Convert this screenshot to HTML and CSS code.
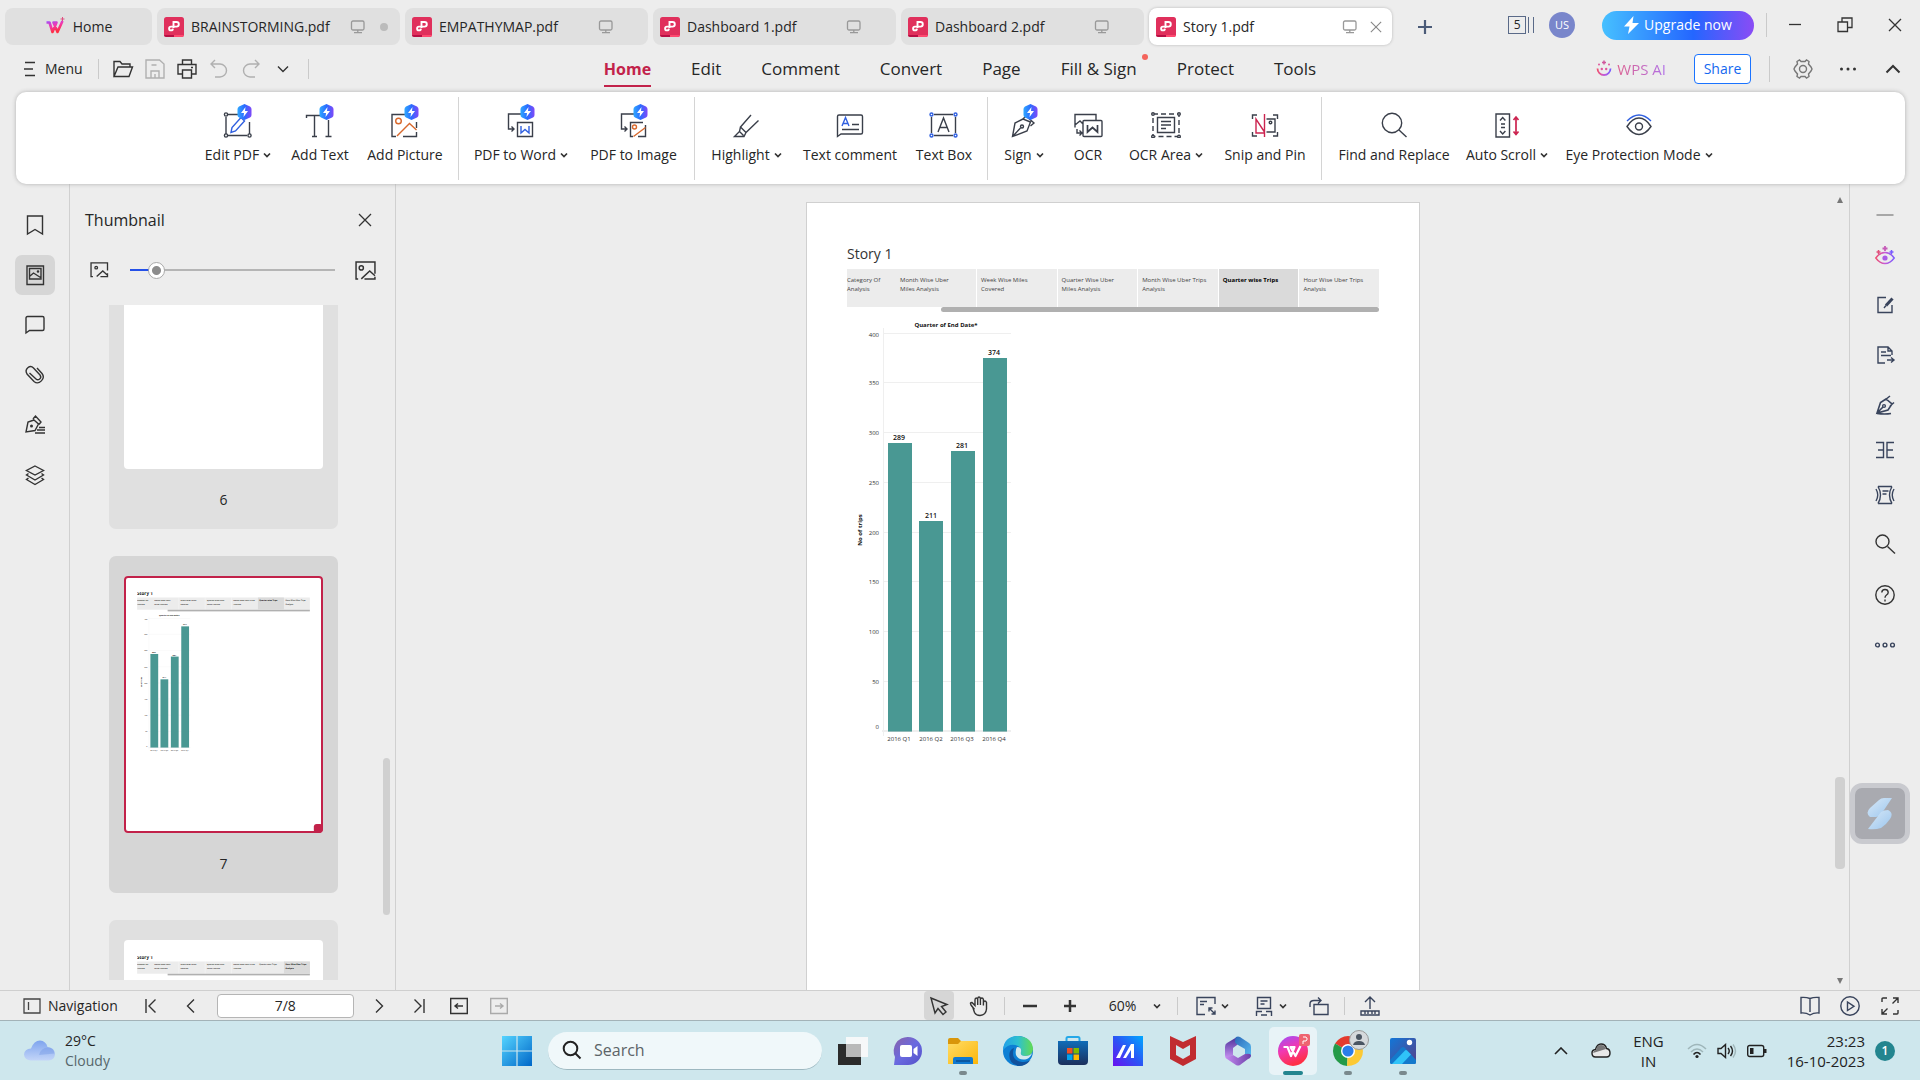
FILE: index.html
```html
<!DOCTYPE html>
<html lang="en">
<head>
<meta charset="utf-8">
<title>Story 1.pdf</title>
<link rel="stylesheet" href="styles.css">
</head>
<body>
<svg class="defs" width="0" height="0" aria-hidden="true">
  <defs>
    <linearGradient id="g-hex" x1="0" x2="1"><stop offset="0" stop-color="#2fa8ff"/><stop offset=".5" stop-color="#2b6cff"/><stop offset="1" stop-color="#8048f8"/></linearGradient>
    <linearGradient id="g-ai" x1="0" x2="1"><stop offset="0" stop-color="#f0506e"/><stop offset=".5" stop-color="#c65bd8"/><stop offset="1" stop-color="#7a5cff"/></linearGradient>
    <linearGradient id="g-win" x1="0" y1="0" x2="1" y2="1"><stop offset="0" stop-color="#55d4ff"/><stop offset="1" stop-color="#0067c8"/></linearGradient>
    <linearGradient id="g-cloud" x1="0" y1="0" x2="0" y2="1"><stop offset="0" stop-color="#7ea4ee"/><stop offset="1" stop-color="#c3d5f8"/></linearGradient>
    <linearGradient id="g-chat" x1="0" y1="0" x2="1" y2="1"><stop offset="0" stop-color="#8a63a8"/><stop offset=".5" stop-color="#6a6ae0"/><stop offset="1" stop-color="#5450c8"/></linearGradient>
    <linearGradient id="g-folder" x1="0" y1="0" x2="1" y2="1"><stop offset="0" stop-color="#ffdc66"/><stop offset="1" stop-color="#fbb60a"/></linearGradient>
    <linearGradient id="g-edge" x1="0" y1="0" x2="1" y2="0"><stop offset="0" stop-color="#22a0e8"/><stop offset=".5" stop-color="#2ec0d0"/><stop offset="1" stop-color="#63dc50"/></linearGradient>
    <linearGradient id="g-store" x1="0" y1="0" x2="0" y2="1"><stop offset="0" stop-color="#0f6cb8"/><stop offset="1" stop-color="#1c2f5c"/></linearGradient>
    <linearGradient id="g-asus" x1="1" y1="0" x2="0" y2="1"><stop offset="0" stop-color="#00a8ff"/><stop offset=".5" stop-color="#2b55f5"/><stop offset="1" stop-color="#6a10f0"/></linearGradient>
    <linearGradient id="g-wps" x1="0" y1="0" x2=".4" y2="1"><stop offset="0" stop-color="#9a50ff"/><stop offset=".5" stop-color="#f238b0"/><stop offset="1" stop-color="#ff2f45"/></linearGradient>
    <linearGradient id="g-photo" x1="0" y1="0" x2="1" y2="1"><stop offset="0" stop-color="#1277d8"/><stop offset="1" stop-color="#584088"/></linearGradient>
    <linearGradient id="g-365a" x1="0" y1="0" x2="0" y2="1"><stop offset="0" stop-color="#4a2f98"/><stop offset="1" stop-color="#c490f0"/></linearGradient>
    <linearGradient id="g-365b" x1="0" y1="0" x2="1" y2="1"><stop offset="0" stop-color="#2c68b8"/><stop offset="1" stop-color="#58bdf2"/></linearGradient>
    <linearGradient id="g-365c" x1="0" y1="0" x2="1" y2="0"><stop offset="0" stop-color="#c78cf2"/><stop offset="1" stop-color="#6a3fa8"/></linearGradient>
    <linearGradient id="g-float" x1="0" y1="0" x2="1" y2="1"><stop offset="0" stop-color="#d8e9f8"/><stop offset="1" stop-color="#9cc6ee"/></linearGradient>
    <symbol id="hex" viewBox="0 0 15 16"><g stroke="none"><path d="M7.500 0l5.500 2.500q1.500 1 1.500 2.500v6q0 1.500-1.500 2.500L7.500 16 2 13.500Q.5 12.500.5 11V5Q.5 3.500 2 2.500z" fill="url(#g-hex)"/><path d="M8.500 3L4 9h3l-.5 4L11 7H8z" fill="#fff"/></g></symbol>
    <symbol id="pdf" viewBox="0 0 20 20"><rect width="20" height="20" rx="2.500" fill="#e0305c"/><path d="M0 18h10v2H2.500Q0 20 0 18z" fill="#b80f44"/><path d="M10 18h10q0 2-2.500 2H10z" fill="#ff4a70"/><path d="M9.500 11V5h3a2.300 2.300 0 0 1 0 4.600H7a1.900 1.900 0 1 0 1.900 2" fill="none" stroke="#fff" stroke-width="1.900"/></symbol>
    <symbol id="screen" viewBox="0 0 16 14"><g fill="none" stroke="#999" stroke-width="1.300"><rect x="1.500" y="1" width="12.500" height="9" rx="1.500"/><path d="M7.800 10v2.500M4 12.600h8"/></g></symbol>
    <symbol id="chev" viewBox="0 0 8 8"><path d="M1 2.500L4 5.500 7 2.500" fill="none" stroke="#333" stroke-width="1.700"/></symbol>
    <symbol id="chart" viewBox="0 0 180 440">
      <g class="chart-grid"><path d="M36.500 16v408M36 21.500h128M36 70.500h128M36 120.500h128M36 170.500h128M36 220.500h128M36 269.500h128M36 319.500h128M36 369.500h128"/><path d="M35 419h129" stroke-width="2"/></g>
      <g fill="#499893"><rect x="41" y="131" width="24" height="288"/><rect x="72" y="209" width="24" height="210"/><rect x="104" y="139" width="24" height="280"/><rect x="136" y="46" width="24" height="373"/></g>
      <g fill="#91b9b7"><path d="M41 419h24v1H41zM72 419h24v1H72zM104 419h24v1h-24zM136 419h24v1h-24z"/></g>
      <g class="chart-strong"><text x="99" y="15">Quarter of End Date*</text><text transform="translate(15 218) rotate(-90)">No of trips</text></g>
      <g class="chart-value"><text x="52" y="128">289</text><text x="84" y="206">211</text><text x="115" y="136">281</text><text x="147" y="43">374</text></g>
      <g class="chart-axis"><text x="32" y="25">400</text><text x="32" y="73">350</text><text x="32" y="123">300</text><text x="32" y="173">250</text><text x="32" y="223">200</text><text x="32" y="272">150</text><text x="32" y="322">100</text><text x="32" y="372">50</text><text x="32" y="417">0</text></g>
      <g class="chart-quarter"><text x="52" y="429">2016 Q1</text><text x="84" y="429">2016 Q2</text><text x="115" y="429">2016 Q3</text><text x="147" y="429">2016 Q4</text></g>
    </symbol>
    <symbol id="strip" viewBox="0 0 532 60">
      <path d="M0 16h532v38H0z" fill="#ececec"/><path d="M128.500 16v38M209.500 16v38M290.500 16v38" stroke="#fff"/><path d="M94 54h438v5H94z" fill="#b0b0b0"/>
      <text class="mini-title" x="0" y="7">Story 1</text>
      <g class="mini-text"><text x="0" y="28">Category Of</text><text x="0" y="38">Analysis</text><text x="53" y="28">Month Wise Uber</text><text x="53" y="38">Miles Analysis</text><text x="134" y="28">Week Wise Miles</text><text x="134" y="38">Covered</text><text x="215" y="28">Quarter Wise Uber</text><text x="215" y="38">Miles Analysis</text><text x="296" y="28">Month Wise Uber Trips</text><text x="296" y="38">Analysis</text></g>
    </symbol>
  </defs>
</svg>

<header class="titlebar">
  <nav class="doc-tabs" aria-label="Open documents">
    <button class="doc-tab doc-tab--home"><svg width="20" height="20" viewBox="0 0 20 20"><path d="M1.500 5.500h3l3 9.500 4-9.500-3 0 4 9.500 5-11" fill="none" stroke="url(#g-wps)" stroke-width="2.600" stroke-linejoin="round"/><path d="M17.500 0v4M15.500 2h4" stroke="#e05080"/></svg>Home</button>
    <button class="doc-tab"><svg class="pdf"><use href="#pdf"/></svg><span>BRAINSTORMING.pdf</span><svg class="screen"><use href="#screen"/></svg><i class="unsaved"></i></button>
    <button class="doc-tab"><svg class="pdf"><use href="#pdf"/></svg><span>EMPATHYMAP.pdf</span><svg class="screen"><use href="#screen"/></svg><i class="tab-end"></i></button>
    <button class="doc-tab"><svg class="pdf"><use href="#pdf"/></svg><span>Dashboard 1.pdf</span><svg class="screen"><use href="#screen"/></svg><i class="tab-end"></i></button>
    <button class="doc-tab"><svg class="pdf"><use href="#pdf"/></svg><span>Dashboard 2.pdf</span><svg class="screen"><use href="#screen"/></svg><i class="tab-end"></i></button>
    <button class="doc-tab doc-tab--active"><svg class="pdf"><use href="#pdf"/></svg><span>Story 1.pdf</span><svg class="screen"><use href="#screen"/></svg><svg class="tab-close" viewBox="0 0 14 14"><path d="M1 1l12 12M13 1L1 13" stroke="#888" stroke-width="1.300"/></svg></button>
    <button class="new-tab" aria-label="New tab"><svg width="16" height="16" viewBox="0 0 16 16"><path d="M8 1v14M1 8h14" stroke="#4b5b78" stroke-width="2.200"/></svg></button>
  </nav>
  <div class="account">
    <button class="tab-count"><span>5</span></button>
    <button class="avatar">US</button>
    <button class="upgrade"><svg width="15" height="18" viewBox="0 0 15 18"><path d="M9.500 0L0 10.500h5.500L4 18 15 7H8.500z" fill="#fff"/></svg>Upgrade now</button>
    <i class="sep"></i>
    <button class="window-btn" aria-label="Minimise"><svg width="14" height="14" viewBox="0 0 14 14"><path d="M1 6.500h12" stroke="#333" stroke-width="1.300"/></svg></button>
    <button class="window-btn" aria-label="Restore"><svg width="16" height="16" viewBox="0 0 16 16" fill="none" stroke="#333" stroke-width="1.300"><path d="M1 5h9.500v9.500H1zM5 5V1h10v9.500h-4.500"/></svg></button>
    <button class="window-btn" aria-label="Close"><svg width="14" height="14" viewBox="0 0 14 14"><path d="M1 1l12 12M13 1L1 13" stroke="#333" stroke-width="1.300"/></svg></button>
  </div>
</header>

<div class="menubar">
  <div class="quick">
    <button class="menu-btn"><svg width="12" height="16" viewBox="0 0 12 16"><path d="M1 1.500h10M0 8h9M1 14.500h10" stroke="#333" stroke-width="1.300"/></svg>Menu</button>
    <i class="sep"></i>
    <button class="quick-btn" aria-label="Open"><svg class="ic20" viewBox="0 0 20 20"><path d="M1 17V2.500h6l2 2.500h8v3M1 17.500L5 8h14.500l-3.500 9.500z"/></svg></button>
    <button class="quick-btn quick-btn--off" aria-label="Save"><svg class="ic20" viewBox="0 0 20 20"><path d="M1 1h13.500L19 5v14H1zM6 19v-7h8v7M6.500 6h5M10 15v4"/></svg></button>
    <button class="quick-btn" aria-label="Print"><svg class="ic20" viewBox="0 0 20 20"><path d="M5.500 5V1h9v4M5 15H1V5.500h18V15h-4M5.500 11h9v8h-9zM14 8.500h2"/></svg></button>
    <button class="quick-btn quick-btn--off" aria-label="Undo"><svg class="ic20" viewBox="0 0 20 20"><path d="M6 1L2 5l4 4M2 5h9a6.500 6.500 0 0 1 0 13H6"/></svg></button>
    <button class="quick-btn quick-btn--off" aria-label="Redo"><svg class="ic20" viewBox="0 0 20 20"><path d="M14 1l4 4-4 4M18 5H9a6.500 6.500 0 0 0 0 13h5"/></svg></button>
    <button class="quick-btn" aria-label="More"><svg class="ic20" viewBox="0 0 20 20"><path d="M5 7.500l5 5 5-5"/></svg></button>
    <i class="sep"></i>
  </div>
  <nav class="ribbon-tabs" aria-label="Ribbon">
    <a class="active" href="#">Home</a><a href="#">Edit</a><a href="#">Comment</a><a href="#">Convert</a><a href="#">Page</a><a class="has-dot" href="#">Fill &amp; Sign</a><a href="#">Protect</a><a href="#">Tools</a>
  </nav>
  <div class="menu-right">
    <a class="wps-ai" href="#"><svg width="16" height="18" viewBox="0 0 16 18"><path d="M1.500 8.500a6.500 6.500 0 1 0 13 0" fill="none" stroke="url(#g-ai)" stroke-width="1.800"/><path d="M8 .5v4M6 2.500h4" stroke="#d0569c" stroke-width="1.500"/><g fill="#e0569c"><circle cx="3" cy="4.500" r="1"/><circle cx="13" cy="4.500" r="1"/><circle cx="5.800" cy="9" r="1.200"/><circle cx="10.200" cy="9" r="1.200"/></g></svg><span>WPS AI</span></a>
    <button class="share">Share</button>
    <i class="sep"></i>
    <button class="tool-btn" aria-label="Settings"><svg class="ic20 grey" viewBox="0 0 20 20"><path d="M8 2.500L6.500 1 4 2.500 4.500 5 2 8 1 10l1 2 2.500 3L4 17.500 6.500 19 8 17.500h4l1.500 1.500 2.500-1.500-.5-2.500L18 12l1-2-1-2-2.500-3 .5-2.500L13.500 1 12 2.500z"/><circle cx="10" cy="10" r="3.500"/></svg></button>
    <button class="tool-btn" aria-label="More options"><svg class="ic20" viewBox="0 0 20 20"><g fill="#333" stroke="none"><circle cx="3.500" cy="10" r="1.500"/><circle cx="10" cy="10" r="1.500"/><circle cx="16.500" cy="10" r="1.500"/></g></svg></button>
    <button class="tool-btn" aria-label="Collapse ribbon"><svg class="ic20" viewBox="0 0 20 20"><path d="M3.500 13.500l6.500-6.500 6.500 6.500" stroke-width="2"/></svg></button>
  </div>
</div>

<div class="ribbon">
  <button><svg class="ric" viewBox="0 0 32 36"><path d="M5 12.500h14M4 15v17M27.500 20v12M6 33.500h19"/><path d="M9 30.500l1-5 9-10 3.500 3.500-9 10z" stroke="#2f5fe0"/><g fill="#fff"><circle cx="4" cy="12.500" r="1.600"/><circle cx="4" cy="33.500" r="1.600"/><circle cx="27.500" cy="33.500" r="1.600"/></g><use href="#hex" x="15" y="2" width="15" height="16"/></svg><span>Edit PDF<svg class="chev"><use href="#chev"/></svg></span></button>
  <button><svg class="ric" viewBox="0 0 32 36"><path d="M2.500 16v-2.500H17M10.500 14v20M8 34.500h5M24.500 18v16M21.500 34.500h6"/><use href="#hex" x="15" y="2" width="15" height="16"/></svg><span>Add Text</span></button>
  <button><svg class="ric" viewBox="0 0 32 36"><path d="M16 12.500H3v22h4M27.500 20v6M27.500 30v4.500H14"/><g stroke="#d8682c"><circle cx="9.500" cy="19" r="2.800"/><path d="M8 34l12.500-12.500 7 6.500"/></g><use href="#hex" x="15" y="2" width="15" height="16"/></svg><span>Add Picture</span></button>
  <i></i>
  <button><svg class="ric" viewBox="0 0 32 36"><path d="M16 12H3.500v15H9M6.500 24.500L9 27l-2.500 2.500M12.500 20.500h15v14h-15z"/><path d="M16 24v7l4-3.500 4 3.500v-7" stroke="#2f5fe0"/><use href="#hex" x="15" y="2" width="15" height="16"/></svg><span>PDF to Word<svg class="chev"><use href="#chev"/></svg></span></button>
  <button><svg class="ric" viewBox="0 0 32 36"><path d="M16 12H3.500v15H9M6.500 24.500L9 27l-2.500 2.500M15 34.500h-2.500v-14H25M27.500 23v11.500H20"/><g stroke="#d8682c"><circle cx="16.500" cy="25" r="2"/><path d="M15.500 34.500l12-9"/></g><use href="#hex" x="15" y="2" width="15" height="16"/></svg><span>PDF to Image</span></button>
  <i></i>
  <button><svg class="ric" viewBox="0 0 32 36"><path d="M20 13l-10.500 12 5.500 5.500 12.500-12M9.500 25l-1 4.500-5 5H13l2-4M8.500 29.500l4 4"/></svg><span>Highlight<svg class="chev"><use href="#chev"/></svg></span></button>
  <button><svg class="ric" viewBox="0 0 32 36"><path d="M3.500 34.500v-20q0-1.500 1.500-1.500h22q1.500 0 1.500 1.500v16q0 1.500-1.500 1.500H7zM18 22.500h7M8 27.500h17"/><path d="M8 24l3.500-8.500L15 24M9.300 21.500h4.500" stroke="#2f5fe0"/></svg><span>Text comment</span></button>
  <button><svg class="ric" viewBox="0 0 32 36"><path d="M6 12.500h19M6 33.500h19M3.500 15v16M27.500 15v16M10 30l5.500-14L21 30M12 25.500h7"/><g fill="#fff" stroke="#2f5fe0"><circle cx="3.500" cy="12.500" r="1.500"/><circle cx="3.500" cy="33.500" r="1.500"/><circle cx="27.500" cy="12.500" r="1.500"/><circle cx="27.500" cy="33.500" r="1.500"/></g></svg><span>Text Box</span></button>
  <i></i>
  <button><svg class="ric" viewBox="0 0 32 36"><path d="M15 17l-8 4-2.500 13.500 14.500-5.500 3.500-9zM15 17l3-3 8 7-3.500 3M5 34l7.500-8"/><circle cx="14" cy="24.500" r="1.500"/><use href="#hex" x="15" y="2" width="15" height="16"/></svg><span>Sign<svg class="chev"><use href="#chev"/></svg></span></button>
  <button><svg class="ric" viewBox="0 0 32 36"><path d="M11 33.500v-14q0-1 1-1H29q1 0 1 1v14q0 1-1 1H12q-1 0-1-1zM24 18.500v-6H3v13M3 23l5-4 3 3M5 27v4h5M7.500 28.500L10 31l-2.500 2.500"/><path d="M15.500 23v7l5-4.500 5 4.500v-7" stroke-width="1.700"/></svg><span>OCR</span></button>
  <button><svg class="ric" viewBox="0 0 32 36"><path d="M3 12h26v22.500H3z" stroke-dasharray="5 3"/><path d="M7.500 15.500h17v15h-17zM11 19.500h10M11 23h10M11 26.500h5"/><g fill="#fff"><circle cx="3" cy="12" r="1.300"/><circle cx="29" cy="12" r="1.300"/><circle cx="3" cy="34.500" r="1.300"/><circle cx="29" cy="34.500" r="1.300"/></g></svg><span>OCR Area<svg class="chev"><use href="#chev"/></svg></span></button>
  <button><svg class="ric" viewBox="0 0 32 36"><path d="M3.500 17v-4H8M3.500 30v4H8M24 13h4.500v4M24 34h4.500v-4M17.500 17H26v13h-8.500"/><circle cx="21.500" cy="20.500" r="1.300"/><path d="M15.500 12v23M15.500 31H7V17l8.500 13" stroke="#cc2450"/></svg><span>Snip and Pin</span></button>
  <i></i>
  <button><svg class="ric" viewBox="0 0 32 36"><circle cx="14" cy="21" r="9.700"/><path d="M21 28l7.500 7"/></svg><span>Find and Replace</span></button>
  <button><svg class="ric" viewBox="0 0 32 36"><path d="M5 12h13.500v23H5zM9 18.500l2.700-3 2.700 3M9 29l2.700 3 2.700-3M10 22h4M10 25.500h4"/><path d="M25 15v18M22.500 18l2.500-3 2.500 3M22.500 29.500l2.500 3 2.500-3" stroke="#cc2450" stroke-width="1.700"/></svg><span>Auto Scroll<svg class="chev"><use href="#chev"/></svg></span></button>
  <button><svg class="ric" viewBox="0 0 32 36"><path d="M4 24.500q5.500-8.500 12-8.500t12 8.500q-5.500 8-12 8t-12-8z"/><circle cx="16" cy="24.500" r="3.500"/><path d="M4 19q12-12 24 0" stroke="#2f5fe0"/></svg><span>Eye Protection Mode<svg class="chev"><use href="#chev"/></svg></span></button>
</div>

<main class="workspace">
  <nav class="rail rail--left" aria-label="Panels">
    <button aria-label="Bookmarks"><svg class="ic20" viewBox="0 0 20 20"><path d="M2.500 1h15v18L10 14.500 2.500 19z"/></svg></button>
    <button class="active" aria-label="Thumbnails"><svg class="ic20" viewBox="0 0 20 20"><path d="M2 1h16.500v18.500H2zM4.500 3.500H16v10.500H4.500zM5 11l3.500-3 7 4.500"/><circle cx="13" cy="6.500" r=".6"/></svg></button>
    <button aria-label="Comments"><svg class="ic20" viewBox="0 0 20 20"><path d="M1 18V3q0-1.500 1.500-1.500h15Q19 1.500 19 3v11q0 1.500-1.500 1.500h-13z"/></svg></button>
    <button aria-label="Attachments"><svg class="ic20" viewBox="0 0 20 20"><path d="M12 3l5 5.500c4 5-3 12-8 8L2 9C-1 4 5-.5 8.500 3l6.500 7c2.500 3.500-2 6-4 4L4.500 8"/></svg></button>
    <button aria-label="Signatures"><svg class="ic20" viewBox="0 0 20 20"><path d="M9 5L3 7 1 17l9-1.500L13.500 9zM8 4l2.500-3L16 7l-2 2.500M14 12.500h6M12 15h8M10 18h10"/><circle cx="6.500" cy="11" r=".8"/></svg></button>
    <button aria-label="Layers"><svg class="ic20" viewBox="0 0 20 20"><path d="M10 1l8.500 4.500L10 10 1.500 5.500zM3.500 8.500l-2 1.500 8.500 5 8.500-5-2-1.500M3.500 13l-2 1.500 8.500 5 8.500-5-2-1.500"/></svg></button>
  </nav>

  <aside class="panel">
    <div class="panel-head"><h2>Thumbnail</h2><button aria-label="Close panel"><svg width="14" height="14" viewBox="0 0 14 14"><path d="M1 1l12 12M13 1L1 13" stroke="#333" stroke-width="1.300"/></svg></button></div>
    <div class="panel-size">
      <svg class="pic-small" viewBox="0 0 20 17"><path d="M3 15.500H1V1h17.500v8M7 15.500l6.500-6 5 4.500M11 15.500h7.500V12"/><circle cx="6.500" cy="6" r="1.400"/></svg>
      <input type="range" min="0" max="100" value="10" aria-label="Thumbnail size">
      <svg class="pic-large" viewBox="0 0 20 18"><path d="M3 17H1V1h18v11M6 17l8-7.500 5 4.500M9 17h10v-2"/><circle cx="6" cy="6.500" r="2"/></svg>
    </div>
    <div class="thumbs-area">
      <div class="thumbs">
        <figure class="thumb"><svg class="sheet" viewBox="0 0 612 791"></svg><figcaption>6</figcaption></figure>
        <figure class="thumb thumb--current"><svg class="sheet" viewBox="0 0 612 791"><use href="#strip" x="40" y="50" width="532" height="60"/><path d="M412 66h80v38h-80z" fill="#dadada"/><text class="mini-strong" x="416" y="78">Quarter wise Trips</text><g class="mini-text"><text x="497" y="78">Hour Wise Uber Trips</text><text x="497" y="88">Analysis</text></g><use href="#chart" x="40" y="109" width="180" height="440"/><rect x="584" y="763" width="28" height="28" rx="9" fill="#c2224a"/></svg><figcaption>7</figcaption></figure>
        <figure class="thumb"><svg class="sheet" viewBox="0 0 612 791"><use href="#strip" x="40" y="50" width="532" height="60"/><path d="M492 66h80v38h-80z" fill="#dadada"/><text class="mini-text" x="416" y="78">Quarter wise Trips</text><g class="mini-strong"><text x="497" y="78">Hour Wise Uber Trips</text><text x="497" y="88">Analysis</text></g></svg></figure>
      </div>
      <div class="panel-scroll"><i></i></div>
    </div>
  </aside>

  <section class="viewer">
    <div class="canvas">
      <article class="page">
        <h1>Story 1</h1>
        <ul class="story">
          <li>Category Of<br>Analysis</li><li>Month Wise Uber<br>Miles Analysis</li><li>Week Wise Miles<br>Covered</li><li>Quarter Wise Uber<br>Miles Analysis</li><li>Month Wise Uber Trips<br>Analysis</li><li class="current">Quarter wise Trips</li><li>Hour Wise Uber Trips<br>Analysis</li>
        </ul>
        <div class="story-scroll"></div>
        <svg class="chart" role="img" aria-label="No of trips by quarter"><use href="#chart"/></svg>
      </article>
    </div>
    <div class="scrollbar">
      <svg width="8" height="6" viewBox="0 0 8 6"><path d="M1 6l3-6 3 6z" fill="#777"/></svg><i></i>
      <svg width="8" height="6" viewBox="0 0 8 6"><path d="M1 0l3 6 3-6z" fill="#777"/></svg>
    </div>
  </section>

  <nav class="rail rail--right" aria-label="Tools">
    <button aria-label="Hide"><svg class="ic20" viewBox="0 0 20 20"><path d="M1.500 10h17" stroke="#888"/></svg></button>
    <button aria-label="WPS AI"><svg class="ic20" viewBox="0 0 20 20"><path d="M.8 12q4-5.500 9.200-5.500t9.200 5.500q-4 5.500-9.200 5.500T.8 12z" stroke="url(#g-ai)"/><circle cx="10" cy="12" r="2.600" fill="#a95ce6" stroke="none"/><path d="M10 0v5M7.500 2.500h5" stroke="#c65bb8" stroke-width="1.800"/><path d="M3.500 4v4M1.500 6h4" stroke="#e0507a" stroke-width="1.500"/><path d="M16.500 4v4M14.500 6h4" stroke="#7a5cff" stroke-width="1.500"/></svg></button>
    <button aria-label="Edit"><svg class="ic20 navy" viewBox="0 0 20 20"><path d="M11 2.500H3V17.500h14V10"/><path d="M17.500 3.500l-6.500 7" stroke-width="3"/><path d="M11 10.500l-2 2.500"/></svg></button>
    <button aria-label="Convert"><svg class="ic20 navy" viewBox="0 0 20 20"><path d="M10 18H3V2h10l4 4v4M13 2v4h4M6 7h5M6 10.500h10M12 15h7M16 12.500l3 2.500-3 2.500"/></svg></button>
    <button aria-label="Sign"><svg class="ic20 navy" viewBox="0 0 20 20"><path d="M11 4L5.500 7.500 2 18l11-3 4-6zM10 5l5-4M15 11l4-3.500M2 18l6-6M2 18.500q8 1 14 0" stroke-width="1.600"/><circle cx="9" cy="11" r="1.400"/></svg></button>
    <button aria-label="Compare"><svg class="ic20 navy" viewBox="0 0 20 20"><path d="M1 2.500h7.500v15H1M3 10h5.500M19 2.500h-7V17.500h7M12 10h6"/></svg></button>
    <button aria-label="Compress"><svg class="ic20 navy" viewBox="0 0 20 20"><path d="M3 1.500h14M3 18.500h14M3 1.500q5 8.500 0 17M17 1.500q-5 8.500 0 17M1 4q3.500 6 0 12M19 4q-3.500 6 0 12M7.500 6h6M7.500 9h4"/></svg></button>
    <button aria-label="Search"><svg class="ic20" viewBox="0 0 20 20"><circle cx="7.500" cy="7.500" r="6.500"/><path d="M12.500 12.500L20 19.500"/></svg></button>
    <button aria-label="Help"><svg class="ic20" viewBox="0 0 20 20"><circle cx="10" cy="10" r="9.200"/><path d="M6.800 7.500Q7 4.500 10 4.500t3.200 2.800Q13.200 9 11.500 10 10 11 10 12.800M10 14.500v2"/></svg></button>
    <button aria-label="More"><svg class="ic20 navy" viewBox="0 0 20 20"><circle cx="2.500" cy="10" r="1.900"/><circle cx="10" cy="10" r="1.900"/><circle cx="17.500" cy="10" r="1.900"/></svg></button>
    <button class="float" aria-label="Assistant"><svg width="26" height="34" viewBox="0 0 26 34"><path d="M12 3Q14 1 17 1h8L17 13q-3 6-8 7H3Q-2 16 3 11z" fill="url(#g-float)"/><path d="M14 15q3-2 7-2 6 3 2 9-4 6-9 9-6 2-13 1z" fill="url(#g-float)"/></svg></button>
  </nav>
</main>

<footer class="status">
  <div class="status-left">
    <button class="nav-toggle"><svg width="18" height="16" viewBox="0 0 18 16" fill="none" stroke="#444" stroke-width="1.300"><path d="M1 1h16v14H1zM5.500 4v8"/></svg>Navigation</button>
    <button aria-label="First page"><svg class="ic16" viewBox="0 0 16 16"><path d="M3 1v14M12.500 1.500L6 8l6.500 6.500"/></svg></button>
    <button aria-label="Previous page"><svg class="ic16" viewBox="0 0 16 16"><path d="M11 1.500L4.500 8l6.500 6.500"/></svg></button>
    <input class="page-no" type="text" value="7/8" aria-label="Page number">
    <button aria-label="Next page"><svg class="ic16" viewBox="0 0 16 16"><path d="M5 1.500L11.500 8 5 14.500"/></svg></button>
    <button aria-label="Last page"><svg class="ic16" viewBox="0 0 16 16"><path d="M13 1v14M3.500 1.500L10 8l-6.500 6.500"/></svg></button>
    <button aria-label="Back"><svg class="ic18" viewBox="0 0 18 18"><path d="M.7 1.500h16.600v15H.7zM13 9H5M8 6.500L5 9l3 2.500"/></svg></button>
    <button class="off" aria-label="Forward"><svg class="ic18" viewBox="0 0 18 18"><path d="M.7 1.500h16.600v15H.7zM5 9h8M10 6.500L13 9l-3 2.500"/></svg></button>
  </div>
  <div class="status-view">
    <button class="active" aria-label="Select"><svg class="ic18" viewBox="0 0 18 18"><path d="M1 1l4 15 3-4.500 5 6 3-2.500-4.500-5.500L17 7.500z"/></svg></button>
    <button aria-label="Hand"><svg class="ic20" viewBox="0 0 20 20"><path d="M5.500 13.500L2 9q-1.500-2.500 1-2.500l3 3V4q0-2 1.300-2T8.700 4v5V2.500Q9 1 10 1t1.400 1.500V9 3Q12 2 13 2t1.400 1.500V9.500 6.500q.5-1.500 1.500-1.500T17.500 6.500V13q-.5 6-6.500 6.500-4 0-5.500-3L4 12"/></svg></button>
    <i class="sep"></i>
    <button aria-label="Zoom out"><svg class="ic16" viewBox="0 0 16 16"><path d="M1 8h14" stroke-width="2.500"/></svg></button>
    <button aria-label="Zoom in"><svg class="ic16" viewBox="0 0 16 16"><path d="M2 8h12M8 2v12" stroke-width="2.500"/></svg></button>
    <button class="zoom-level">60%<svg class="chev"><use href="#chev"/></svg></button>
    <i class="sep"></i>
    <button class="with-chev" aria-label="Fit page"><svg class="ic20 navy" viewBox="0 0 20 20"><path d="M9 18.500H1v-17h18V8M4 5.500h7M4 8.500h4M13 12l6 6M13 15.500V12h3.500M19 14.500V18h-3.500"/></svg><svg class="chev"><use href="#chev"/></svg></button>
    <button class="with-chev" aria-label="Page layout"><svg class="ic20 navy" viewBox="0 0 20 20"><path d="M3.500 1.500h13v11h-13zM6.500 5h7M6.500 8h4M2.500 20v-4.500H8M12 15.500h5.500V20M7 19h6"/></svg><svg class="chev"><use href="#chev"/></svg></button>
    <button class="wide" aria-label="Rotate"><svg class="ic20 navy" viewBox="0 0 20 20"><path d="M5 8.500h14v10H5zM1 11V8q0-3.500 4-3.500h7M9 1.500l3 3-3 3"/></svg></button>
    <i class="sep"></i>
    <button class="wide" aria-label="Upload"><svg class="ic20 navy" viewBox="0 0 20 20"><path d="M10 13V1.500M5 6l5-5 5 5M1 15h18v4H1zM5 15v3M8 15v3M12 15v3M15 15v3"/></svg></button>
  </div>
  <div class="status-right">
    <button aria-label="Read mode"><svg class="ic20 navy" viewBox="0 0 20 20"><path d="M10 2.500q-4-1.500-9-1V17q5-.5 9 2 4-2.500 9-2V1.500q-5-.5-9 1zV16"/></svg></button>
    <button aria-label="Play"><svg class="ic20 navy" viewBox="0 0 20 20"><circle cx="10" cy="10" r="9.200"/><path d="M7.500 6v8.500l6.500-4.200z"/></svg></button>
    <button aria-label="Full screen"><svg class="ic18" viewBox="0 0 18 18"><path d="M1 5V2q0-1 1-1h4M12 1h5v5M17 1l-5.500 5.500M17 13v3q0 1-1 1h-4M6 17H1v-5M1 17l5.500-5.500"/></svg></button>
  </div>
</footer>

<div class="taskbar">
  <button class="weather">
    <svg width="31" height="21" viewBox="0 0 31 21"><path d="M7 20.500q-6.500-.5-7-6 .5-5.500 7-6Q10 .5 16 .5q6 .5 7.500 6.500 7 .5 7.500 7-.5 6-6.500 6.500z" fill="url(#g-cloud)"/><path d="M15 15q2-8 10-7.500 5 1 5.500 6" fill="#7195e4" opacity=".4"/></svg>
    <span>29°C<br><small>Cloudy</small></span>
  </button>
  <div class="apps">
    <button aria-label="Start"><svg class="app" viewBox="0 0 30 30"><path d="M0 0h14.400v14.400H0zM15.600 0H30v14.400H15.600zM0 15.600h14.400V30H0zM15.600 15.600H30V30H15.600z" fill="url(#g-win)"/></svg></button>
    <label class="search"><svg width="20" height="20" viewBox="0 0 20 20" fill="none" stroke="#222" stroke-width="2"><circle cx="8.500" cy="8.500" r="6.800"/><path d="M13.500 13.500l5 5"/></svg><input type="text" placeholder="Search" aria-label="Search"></label>
    <button aria-label="Task view"><svg class="app" viewBox="0 0 30 30"><path d="M0 8h23v21H0z" fill="#2b2b2b"/><path d="M8 1h22v20H8z" fill="#fafafa" opacity=".92"/><path d="M8 8h15v13H8z" fill="#b9b9b9"/></svg></button>
    <button aria-label="Chat"><svg class="app" viewBox="0 0 30 30"><path d="M15 1a14 14 0 1 1 0 28H1l1-8A14 14 0 0 1 15 1z" fill="url(#g-chat)"/><rect x="7" y="9" width="12" height="12" rx="2" fill="#fff"/><path d="M20.500 13l4-3v10l-4-3z" fill="#fff"/></svg></button>
    <button class="running" aria-label="File Explorer"><svg class="app" viewBox="0 0 30 30"><path d="M0 9V4q0-2 2-2h8l3 3h15q2 0 2 2v5H0z" fill="#d9960a"/><path d="M0 8h10l3-3h15q2 0 2 2v21H0z" fill="url(#g-folder)"/><path d="M5 28v-5q0-2 2-2h16q2 0 2 2v5z" fill="#1079d0"/><path d="M8 25h14" stroke="#0a4e92" stroke-width="1.500"/></svg></button>
    <button aria-label="Edge"><svg class="app" viewBox="0 0 30 30"><circle cx="15" cy="15" r="15" fill="#0d7fd4"/><path d="M0 14Q1 0 15 0q14 1 15 13-.5 7-8 7-5 0-4-4 1-4-3-6Q7 6 0 14z" fill="url(#g-edge)"/><path d="M11 12q-4 12 8 14 5 .5 8.500-2Q23 30 16 30 5 28 6.500 17q1-4 4.500-5z" fill="#11519c"/><path d="M14 11q5 0 4 5-1 4 4 4 5 0 7-3-1 4-5 6-8 2-11-4-1-5 1-8z" fill="#d2e8ed"/></svg></button>
    <button aria-label="Store"><svg class="app" viewBox="0 0 30 30"><path d="M8.500 7V2.500Q8.500 1 10 1h10q1.500 0 1.500 1.500V7" fill="none" stroke="#24a8e8" stroke-width="2"/><path d="M0 5h30v20q0 4-4 4H4q-4 0-4-4z" fill="url(#g-store)"/><path d="M9 12h5.500v5.500H9z" fill="#f25022"/><path d="M15.500 12H21v5.500h-5.500z" fill="#7fba00"/><path d="M9 18.500h5.500V24H9z" fill="#00a4ef"/><path d="M15.500 18.500H21V24h-5.500z" fill="#ffb900"/></svg></button>
    <button aria-label="MyASUS"><svg class="app" viewBox="0 0 30 30"><path d="M0 0h30v30H0z" fill="url(#g-asus)"/><path d="M3 22L10 9h3L7 22zM10 22l8-14h3v14h-3v-8l-5 8z" fill="#fff"/></svg></button>
    <button aria-label="McAfee"><svg class="app" viewBox="0 0 30 30"><path d="M2 0l13 6L28 0v23l-13 7-13-7zM8 9v10l7 4 7-4V9l-7 4z" fill="#c12c30" fill-rule="evenodd"/></svg></button>
    <button aria-label="Microsoft 365"><svg class="app" viewBox="0 0 30 30"><path d="M14 1L4 7Q2 8 2 11v9q3 4 8-1v-7l4-3q4-3 0-8z" fill="url(#g-365a)"/><path d="M13 1q2-1 4 0l9 6q2 1 2 4v9q-2 3-6 0v-7l-7-4q-5-3-2-8z" fill="url(#g-365b)"/><path d="M2 19q3 3 8 0l5 3 7-4q5-1 6 1 0 3-3 4l-8 6q-2 1-4 0l-9-6q-2-1-2-4z" fill="url(#g-365c)"/></svg></button>
    <button class="running focused" aria-label="WPS Office"><svg class="app" viewBox="0 0 30 30"><circle cx="15" cy="15" r="15" fill="url(#g-wps)"/><path d="M5.500 11h4l3.500 9L16.500 11h-4l5 9 5-10" fill="none" stroke="#fff" stroke-width="2.200" stroke-linejoin="round"/><rect x="21" y="-2" width="11" height="12" rx="2" fill="#ee6470"/><path d="M25 8V5h3q2.500-2 0-4h-3" fill="none" stroke="#fff"/></svg></button>
    <button class="running" aria-label="Chrome"><svg class="app" viewBox="0 0 30 30"><path d="M15 15L2 7.500Q7 0 15 0t13 7.500z" fill="#e33b2e"/><path d="M15 15L2 7.500q-4 7 0 15Q6 29 14 30z" fill="#249a48"/><path d="M15 15L14 30q10 0 14-7.500 4-7 0-15z" fill="#fcc934"/><circle cx="15" cy="15" r="7" fill="#fff"/><circle cx="15" cy="15" r="5.600" fill="#2b7de9"/><circle cx="26" cy="4" r="9.500" fill="#d5d9dc" stroke="#999"/><circle cx="26" cy="1" r="3" fill="#4a5562"/><path d="M20 9q1-4 6-4t6 4z" fill="#4a5562"/></svg></button>
    <button class="running" aria-label="Photos"><svg class="app" viewBox="0 0 30 30"><rect x="2" y="2" width="26" height="26" rx="2" fill="url(#g-photo)"/><path d="M2 24l11-12q2-2 4 0l11 12v3l-1 1H3l-1-1z" fill="#1479cc"/><path d="M4 28L17 14.500q1-1 2 0l4 4L14 28z" fill="#30c3f8"/><circle cx="21.500" cy="6.500" r="2.700" fill="#fff"/></svg></button>
  </div>
  <div class="tray">
    <button class="tray-up" aria-label="Hidden icons"><svg width="14" height="8" viewBox="0 0 14 8"><path d="M1 7l6-6 6 6" fill="none" stroke="#222" stroke-width="1.600"/></svg></button>
    <button class="tray-cloud" aria-label="OneDrive"><svg width="20" height="15" viewBox="0 0 20 15"><path d="M4.500 14q-3.500 0-3.500-4 0-3 3.500-3.500Q6 1 10 1q4.500 0 5.500 4.500Q19 6 19 10q0 4-3.500 4z" fill="#e8e8e8" stroke="#222" stroke-width="1.400"/><path d="M2 10q1-3 3-3 1-5 5-5t5 4z" fill="#777"/></svg></button>
    <button class="lang">ENG<br>IN</button>
    <button class="tray-net" aria-label="Network, volume and battery">
      <svg width="20" height="16" viewBox="0 0 20 16" fill="none" stroke-width="1.500"><path d="M1 6q9-9 18 0M4 9q6-6 12 0" stroke="#9fb6ba"/><path d="M6.500 11.500q3.500-4 7 0" stroke="#222"/><circle cx="10" cy="13.500" r="1.600" fill="#222"/></svg>
      <svg width="20" height="16" viewBox="0 0 20 16" fill="none" stroke="#222" stroke-width="1.400"><path d="M1 5.500h3L8.500 1.500v13L4 10.500H1zM11 5q2.500 3 0 6M13.500 3q4 5 0 10"/><path d="M16 1.500q5 6.500 0 13" stroke="#9fb6ba"/></svg>
      <svg width="20" height="14" viewBox="0 0 20 14"><rect x=".7" y="1.500" width="16" height="11" rx="2" fill="none" stroke="#222" stroke-width="1.400"/><path d="M3 4h3.500v6H3zM17 5h2.500v4H17z" fill="#222"/></svg>
    </button>
    <button class="clock">23:23<br>16-10-2023</button>
    <span class="badge">1</span>
  </div>
</div>
</body>
</html>
```
FILE: styles.css
```css
* { box-sizing: border-box; }
html, body { height: 100%; }
body {
  margin: 0;
  display: flex;
  flex-direction: column;
  overflow: hidden;
  background: #ededed;
  color: #262626;
  font: 14px/20px "Open Sans", "Noto Sans", sans-serif;
}
button, input { font: inherit; color: inherit; }
button { padding: 0; border: 0; background: none; display: flex; align-items: center; justify-content: center; white-space: nowrap; }
a { color: inherit; text-decoration: none; }
svg { flex: none; }
.defs { position: absolute; }
.sep { width: 1px; background: #cacaca; flex: none; }
.chev { width: 8px; height: 8px; margin-left: 4px; }

.ic16, .ic18, .ic20 { fill: none; stroke: #333; stroke-width: 1.4; overflow: visible; }
.ic16 { width: 16px; height: 16px; }
.ic18 { width: 18px; height: 18px; }
.ic20 { width: 20px; height: 20px; }
.navy { stroke: #39445c; }
.grey { stroke: #777; }

/* Title bar */
.titlebar { height: 48px; flex: none; display: flex; justify-content: space-between; padding-left: 5px; }
.doc-tabs { display: flex; gap: 5px; padding-top: 8px; }
.doc-tab { width: 243px; height: 37px; padding: 0 6px 0 7px; border-radius: 8px; background: #e0e0e0; justify-content: flex-start; }
.doc-tab span { margin-left: 7px; flex: 1; text-align: left; }
.doc-tab--home { width: 147px; gap: 8px; justify-content: center; padding: 0; }
.doc-tab--active { background: #fff; box-shadow: 0 0 3px #b5b5b5; }
.pdf { width: 20px; height: 20px; }
.screen { width: 16px; height: 14px; }
.unsaved { width: 8px; height: 8px; border-radius: 50%; background: #bbb; margin: 0 6px 0 14px; }
.tab-end { width: 28px; }
.tab-close { width: 12px; height: 12px; margin: 0 4px 0 12px; }
.new-tab { width: 56px; height: 37px; }
.account { display: flex; align-items: center; height: 50px; }
.tab-count { width: 26px; height: 18px; gap: 2px; }
.tab-count span { width: 20px; height: 18px; border: 1px solid #5a6a88; font-size: 12px; line-height: 16px; }
.tab-count::after { content: ""; width: 4px; height: 16px; border: solid #5a6a88; border-width: 0 1px; }
.avatar { width: 26px; height: 26px; border-radius: 50%; background: #7986cb; color: #fff; font-size: 11px; margin: 0 27px 0 15px; }
.upgrade { width: 152px; height: 29px; border-radius: 15px; gap: 5px; color: #fff; background: linear-gradient(90deg, #46c0ff, #2466ff 60%, #8a4cf5); }
.account .sep { height: 24px; margin: 0 3px 0 12px; }
.window-btn { width: 50px; height: 50px; }

/* Menu bar */
.menubar { height: 44px; flex: none; display: grid; grid-template-columns: 1fr auto 1fr; align-items: center; }
.quick { display: flex; align-items: center; padding: 0 0 3px 24px; }
.quick .sep { height: 20px; }
.menu-btn { gap: 9px; margin-right: 15px; }
.quick-btn { width: 32px; height: 32px; }
.menu-btn + .sep { margin-right: 8px; }
.quick-btn + .sep { margin-left: 9px; }
.quick-btn--off .ic20 { stroke: #b0b0b0; }
.ribbon-tabs { display: flex; gap: 40px; font-size: 17px; line-height: 32px; padding-bottom: 3px; }
.ribbon-tabs a { position: relative; }
.ribbon-tabs .active { font-size: 16px; color: #c2224a; font-weight: 700; border-bottom: 2px solid #c2224a; margin-bottom: -2px; }
.has-dot::after { content: ""; position: absolute; right: -11px; top: 1px; width: 6px; height: 6px; border-radius: 50%; background: #f4645c; }
.menu-right { display: flex; align-items: center; justify-content: flex-end; padding: 0 5px 3px 0; }
.wps-ai { display: flex; align-items: center; gap: 5px; margin-right: 28px; font-size: 15px; }
.wps-ai span { background: linear-gradient(90deg, #dc6090, #b070e8); background-clip: text; color: transparent; }
.share { width: 57px; height: 30px; border: 1px solid #1a73ff; border-radius: 4px; background: #fff; color: #1468f0; }
.menu-right .sep { height: 26px; margin: 0 10px 0 18px; }
.tool-btn { width: 45px; height: 32px; }

/* Ribbon */
.ribbon {
  flex: none;
  margin: 0 15px 0 16px;
  height: 92px;
  border-radius: 10px;
  background: #fff;
  box-shadow: 0 0 4px #b0b0b0;
  z-index: 1;
  display: grid;
  justify-content: center;
  grid-template-columns: 88px 76px 94px 13px 112px 113px 8px 97px 110px 78px 8px 66px 62px 94px 104px 8px 138px 88px 176px;
}
.ribbon button { flex-direction: column; justify-content: flex-start; padding-top: 10px; gap: 7px; }
.ribbon > i { width: 1px; margin: 5px auto 4px; background: #d4d4d4; }
.ribbon span { display: flex; align-items: center; }
.ric { width: 32px; height: 36px; fill: none; stroke: #3a3f4a; stroke-width: 1.4; }

/* Workspace */
.workspace { flex: 1; min-height: 0; display: flex; }
.rail { width: 70px; flex: none; position: relative; }
.rail--left { border-right: 1px solid #d0d0d0; display: flex; flex-direction: column; align-items: center; gap: 10px; padding-top: 21px; }
.rail--left button { width: 40px; height: 40px; border-radius: 7px; }
.rail--left .active { background: #d6d6d6; }
.rail--right { width: 71px; border-left: 1px solid #d0d0d0; padding-top: 16px; display: grid; align-content: start; grid-template-rows: 30px 52px 46px 54px 46px 44px 46px 52px 50px 50px; }
.rail--right .float { position: absolute; left: 0; bottom: 146px; width: 60px; height: 61px; border-radius: 12px; border: 5px solid #c9cacf; background: #a9aab0; }

.panel { width: 326px; flex: none; border-right: 1px solid #d0d0d0; display: flex; flex-direction: column; }
.panel-head { display: flex; justify-content: space-between; align-items: center; padding: 20px 15px 0 15px; }
.panel-head h2 { margin: 0; font-size: 16px; line-height: 32px; font-weight: 400; }
.panel-head button { width: 30px; height: 32px; }
.panel-size { display: flex; align-items: center; height: 20px; margin-top: 24px; padding: 0 19px 0 20px; justify-content: space-between; }
.panel-size svg { fill: none; stroke: #333; stroke-width: 1.4; }
.pic-small { width: 19px; height: 16px; }
.pic-large { width: 21px; height: 19px; }
.panel-size input { -webkit-appearance: none; appearance: none; width: 205px; height: 18px; margin: 0; background: linear-gradient(90deg, #2450e8 20px, #b5b5b5 20px) center / 100% 2px no-repeat; }
.panel-size input::-webkit-slider-thumb { -webkit-appearance: none; width: 17px; height: 17px; border-radius: 50%; border: 1px solid #aaa; background: radial-gradient(circle, #8c8c8c 4px, #fff 5px); }
.thumbs-area { flex: 1; min-height: 0; margin: 25px 0 10px; display: flex; justify-content: space-between; overflow: hidden; }
.thumbs { margin: -113px 0 0 39px; width: 229px; display: flex; flex-direction: column; gap: 27px; }
.thumb { margin: 0; height: 337px; flex: none; border-radius: 7px; background: #e0e0e0; padding: 20px 15px; display: flex; flex-direction: column; align-items: center; gap: 21px; }
.sheet { width: 199px; height: 257px; border-radius: 4px; background: #fff; }
.thumb--current { background: #d6d6d6; }
.thumb--current .sheet { outline: 2px solid #c2224a; outline-offset: -2px; }
.sheet text { text-rendering: geometricPrecision; }
.panel-scroll { width: 7px; margin-right: 5px; display: grid; grid-template-rows: 453fr 157px 65fr; }
.panel-scroll i { grid-row: 2; border-radius: 4px; background: #d0d0d0; }

.viewer { flex: 1; min-width: 0; display: flex; }
.canvas { flex: 1; display: flex; justify-content: center; padding-top: 18px; overflow: hidden; }
.page { width: 614px; height: 794px; flex: none; border: 1px solid #d0d0d0; background: #fff; padding: 41px 40px 0 40px; }
.page h1 { margin: 0 0 5px; font-size: 14px; line-height: 20px; font-weight: 400; color: #333; }
.story { margin: 0; padding: 0; list-style: none; display: grid; grid-template-columns: 48px 80px repeat(5, 1fr); column-gap: 1px; height: 38px; font-size: 6px; line-height: 9px; color: #444; white-space: nowrap; }
.story li { background: #ececec; padding: 7px 0 0 4px; }
.story li:first-child { padding-left: 0; box-shadow: 1px 0 #ececec; }
.story .current { background: #dadada; color: #000; font-weight: 700; }
.story-scroll { height: 5px; margin-left: 94px; border-radius: 3px; background: #b0b0b0; }
.chart { display: block; width: 180px; height: 440px; }
.chart-grid { stroke: #efefef; }
.chart-strong, .chart-value { font-size: 6px; font-weight: 700; text-anchor: middle; fill: #111; }
.chart-value { font-size: 7px; font-weight: 600; }
.chart-axis { font-size: 6px; text-anchor: end; fill: #333; }
.chart-quarter { font-size: 6px; text-anchor: middle; fill: #333; }
.mini-title { font-size: 14px; font-weight: 700; fill: #222; }
.mini-text { font-size: 6px; font-weight: 600; fill: #222; }
.mini-strong { font-size: 6px; font-weight: 700; fill: #000; }
.scrollbar { width: 19px; display: grid; grid-template-rows: 24px 569fr 92px 103fr 18px; justify-items: center; align-items: center; }
.scrollbar svg:first-child { align-self: end; margin-bottom: 5px; }
.scrollbar i { grid-row: 3; width: 10px; height: 92px; border-radius: 4px; background: #d0d0d0; }
.scrollbar svg:last-child { grid-row: 5; }

/* Status bar */
.status { height: 31px; flex: none; border-top: 1px solid #cfcfcf; border-bottom: 1px solid #a3b3b8; display: grid; grid-template-columns: 924px auto 1fr; }
.status > div { display: flex; align-items: center; }
.status .off svg { stroke: #aaa; }
.status-left button { width: 40px; height: 28px; }
.status-left .nav-toggle { width: auto; gap: 7px; margin: 0 13px 0 23px; }
.page-no { width: 137px; height: 24px; margin: 0 5px 0 6px; border: 1px solid #b5b5b5; border-radius: 4px; background: #fff; text-align: center; padding: 0; }
.status-view button { width: 40px; height: 29px; }
.status-view .active { width: 30px; margin-right: 5px; border-radius: 4px; background: #d6d6d6; }
.status .sep { height: 18px; margin: 0 5px; }
.status-view .zoom-level { width: 82px; padding-left: 8px; gap: 13px; }
.status-view .with-chev { width: 58px; gap: 1px; }
.status-right { justify-content: flex-end; padding-right: 10px; }
.status-right button { width: 40px; height: 28px; }

/* Taskbar */
.taskbar { height: 59px; flex: none; background: #cee7ed; display: grid; grid-template-columns: 1fr auto 1fr; align-items: center; }
.weather { justify-self: start; margin-left: 24px; gap: 10px; text-align: left; }
.weather small { font-size: 14px; color: #56666b; }
.apps { display: flex; align-items: center; gap: 7px; }
.apps button { width: 48px; height: 48px; position: relative; border-radius: 5px; }
.app { width: 30px; height: 30px; overflow: visible; }
.search { width: 274px; height: 38px; border-radius: 19px; border-bottom: 1px solid #9db8c0; background: #f0f8fa; display: flex; align-items: center; gap: 12px; padding-left: 14px; }
.search input { border: 0; padding: 0; width: 200px; background: none; font-size: 16px; outline: 0; }
.search input::placeholder { color: #5c6468; }
.running::after { content: ""; position: absolute; left: 20px; bottom: 0; width: 8px; height: 4px; border-radius: 2px; background: #7a898d; }
.focused { background: #e8f3f7; }
.focused::after { left: 14px; width: 20px; background: #23858f; }
.tray { display: flex; align-items: center; justify-content: flex-end; padding-right: 25px; color: #222; }
.tray-cloud { margin: 0 22px 0 23px; }
.lang { font-size: 15px; text-align: center; }
.tray-net { gap: 10px; margin: 0 20px 0 23px; }
.clock { font-size: 15px; text-align: right; }
.badge { width: 20px; height: 20px; margin-left: 10px; border-radius: 50%; background: #23858f; color: #fff; font-size: 12px; font-weight: 600; text-align: center; }
```
